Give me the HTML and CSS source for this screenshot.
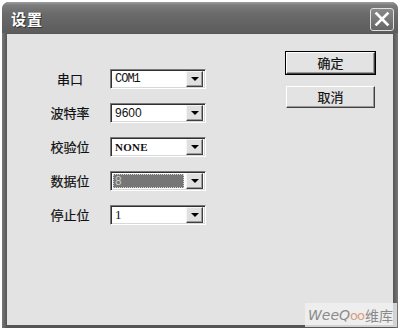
FILE: index.html
```html
<!DOCTYPE html>
<html>
<head>
<meta charset="utf-8">
<link rel="stylesheet" href="styles.css">
</head>
<body>
<div class="window">
  <div class="titlebar">
    <span class="title">设置</span>
    <span class="close">
      <svg width="16" height="16" viewBox="0 0 16 16"><path d="M2.5 2.5 L13.5 13.5 M13.5 2.5 L2.5 13.5" stroke="#fff" stroke-width="2.6" stroke-linecap="square"/></svg>
    </span>
  </div>
  <div class="client">
    <div class="form">
      <span class="label">串口</span>
      <div class="combo"><span class="val mono">COM1</span><span class="drop"></span></div>
      <span class="label">波特率</span>
      <div class="combo"><span class="val sans">9600</span><span class="drop"></span></div>
      <span class="label">校验位</span>
      <div class="combo"><span class="val serif">NONE</span><span class="drop"></span></div>
      <span class="label">数据位</span>
      <div class="combo sel"><span class="val sans">8</span><span class="drop"></span></div>
      <span class="label">停止位</span>
      <div class="combo"><span class="val serif1">1</span><span class="drop"></span></div>
    </div>
    <div class="buttons">
      <button class="btn default">确定</button>
      <button class="btn">取消</button>
    </div>
    <div class="mark"><span class="wee">Wee</span><span class="q">Q</span><span class="oo">oo</span><span class="wk">维库</span></div>
  </div>
</div>
</body>
</html>
```
FILE: styles.css
```css
html, body {
  margin: 0;
  padding: 0;
  background: #fff;
}
body {
  width: 402px;
  height: 331px;
  overflow: hidden;
  font-family: "Noto Sans CJK SC", sans-serif;
}
.window {
  margin: 2px 0 0 2px;
  width: 396px;
  height: 326px;
  background: linear-gradient(90deg, #777 0, #555 5px, #555 391px, #777 396px);
  border-radius: 7px 7px 0 0;
  display: flex;
  flex-direction: column;
  box-sizing: border-box;
}
.titlebar {
  height: 31px;
  flex: none;
  display: flex;
  align-items: center;
  justify-content: space-between;
  padding: 0 4px 0 9px;
  background: linear-gradient(#a0a0a0 0, #7c7c7c 3px, #6a6a6a 12px, #5c5c5c 31px);
  border-radius: 7px 7px 0 0;
}
.title {
  color: #fff;
  font-weight: bold;
  font-size: 15px;
  letter-spacing: 1px;
  text-shadow: 1px 1px 0 #333;
  margin-top: 2px;
}
.close {
  width: 22px;
  height: 21px;
  border: 1px solid #e0e0e0;
  border-radius: 3px;
  background: linear-gradient(#8a8a8a, #666);
  display: flex;
  align-items: center;
  justify-content: center;
  margin-top: 3px;
}
.client {
  position: relative;
  flex: 1;
  margin: 1px 5px 3px 5px;
  background: #e3e3e3;
  display: flex;
  align-items: flex-start;
}
.form {
  padding: 35px 0 0 43px;
  display: grid;
  grid-template-columns: 40px 96px;
  column-gap: 20px;
  row-gap: 14px;
  grid-auto-rows: 20px;
  align-items: center;
}
.label {
  text-align: center;
  font-size: 13px;
  color: #111;
  line-height: 20px;
  -webkit-text-stroke: 0.2px #111;
}
.combo {
  height: 20px;
  box-sizing: border-box;
  border-style: solid;
  border-width: 1px;
  border-color: #7a7a7a #fff #fff #7a7a7a;
  box-shadow: inset 1px 1px 0 #303030, inset -1px -1px 0 #d8d8d8;
  background: #fff;
  display: flex;
  align-items: center;
  padding: 1px 2px 1px 2px;
}
.val {
  flex: 1;
  font-size: 12px;
  color: #111;
  padding-left: 2px;
  line-height: 14px;
}
.mono { font-family: "Liberation Mono", monospace; font-size: 12px; letter-spacing: -1px; }
.sans { font-family: "Liberation Sans", sans-serif; }
.serif { font-family: "Liberation Serif", serif; font-weight: bold; font-size: 11px; letter-spacing: 0.3px; }
.serif1 { font-family: "Liberation Serif", serif; font-size: 13px; }
.drop {
  width: 17px;
  height: 16px;
  box-sizing: border-box;
  border: 1px solid;
  border-color: #f4f4f4 #404040 #404040 #f4f4f4;
  box-shadow: inset -1px -1px 0 #9a9a9a;
  background: #e0e0e0;
  position: relative;
}
.drop::after {
  content: "";
  position: absolute;
  left: 4px;
  top: 5px;
  border-left: 4px solid transparent;
  border-right: 4px solid transparent;
  border-top: 4px solid #000;
}
.sel .val {
  background: #767676;
  color: #c8c8c8;
  outline: 1px dotted #d0d0d0;
  outline-offset: -1px;
  margin-right: 2px;
  height: 14px;
}
.buttons {
  margin-left: auto;
  padding: 18px 18px 0 0;
  display: flex;
  flex-direction: column;
  gap: 12px;
}
.btn {
  width: 89px;
  height: 22px;
  font-family: "Noto Sans CJK SC", sans-serif;
  font-size: 13px;
  color: #111;
  background: #e3e3e3;
  border: 1px solid;
  border-color: #fff #404040 #404040 #fff;
  box-shadow: inset -1px -1px 0 #9a9a9a;
  padding: 0;
  line-height: 18px;
  -webkit-text-stroke: 0.2px #111;
}
.btn.default {
  outline: 1px solid #000;
  outline-offset: 0;
}
.mark {
  position: absolute;
  right: -4px;
  bottom: -2px;
  width: 92px;
  height: 24px;
  background: rgba(240, 240, 240, 0.8);
  display: flex;
  align-items: center;
  padding-left: 3px;
  box-sizing: border-box;
  font-size: 15px;
  color: #8a8a8a;
}
.wee, .q {
  font-family: "DejaVu Sans", sans-serif;
  font-style: italic;
  font-size: 14px;
  color: #8a8a8a;
}
.oo {
  font-family: "DejaVu Sans", sans-serif;
  font-size: 13px;
  color: #d4a080;
  letter-spacing: -1px;
}
.wk {
  font-size: 14px;
  color: #8a8a8a;
  margin-left: 1px;
}
```
